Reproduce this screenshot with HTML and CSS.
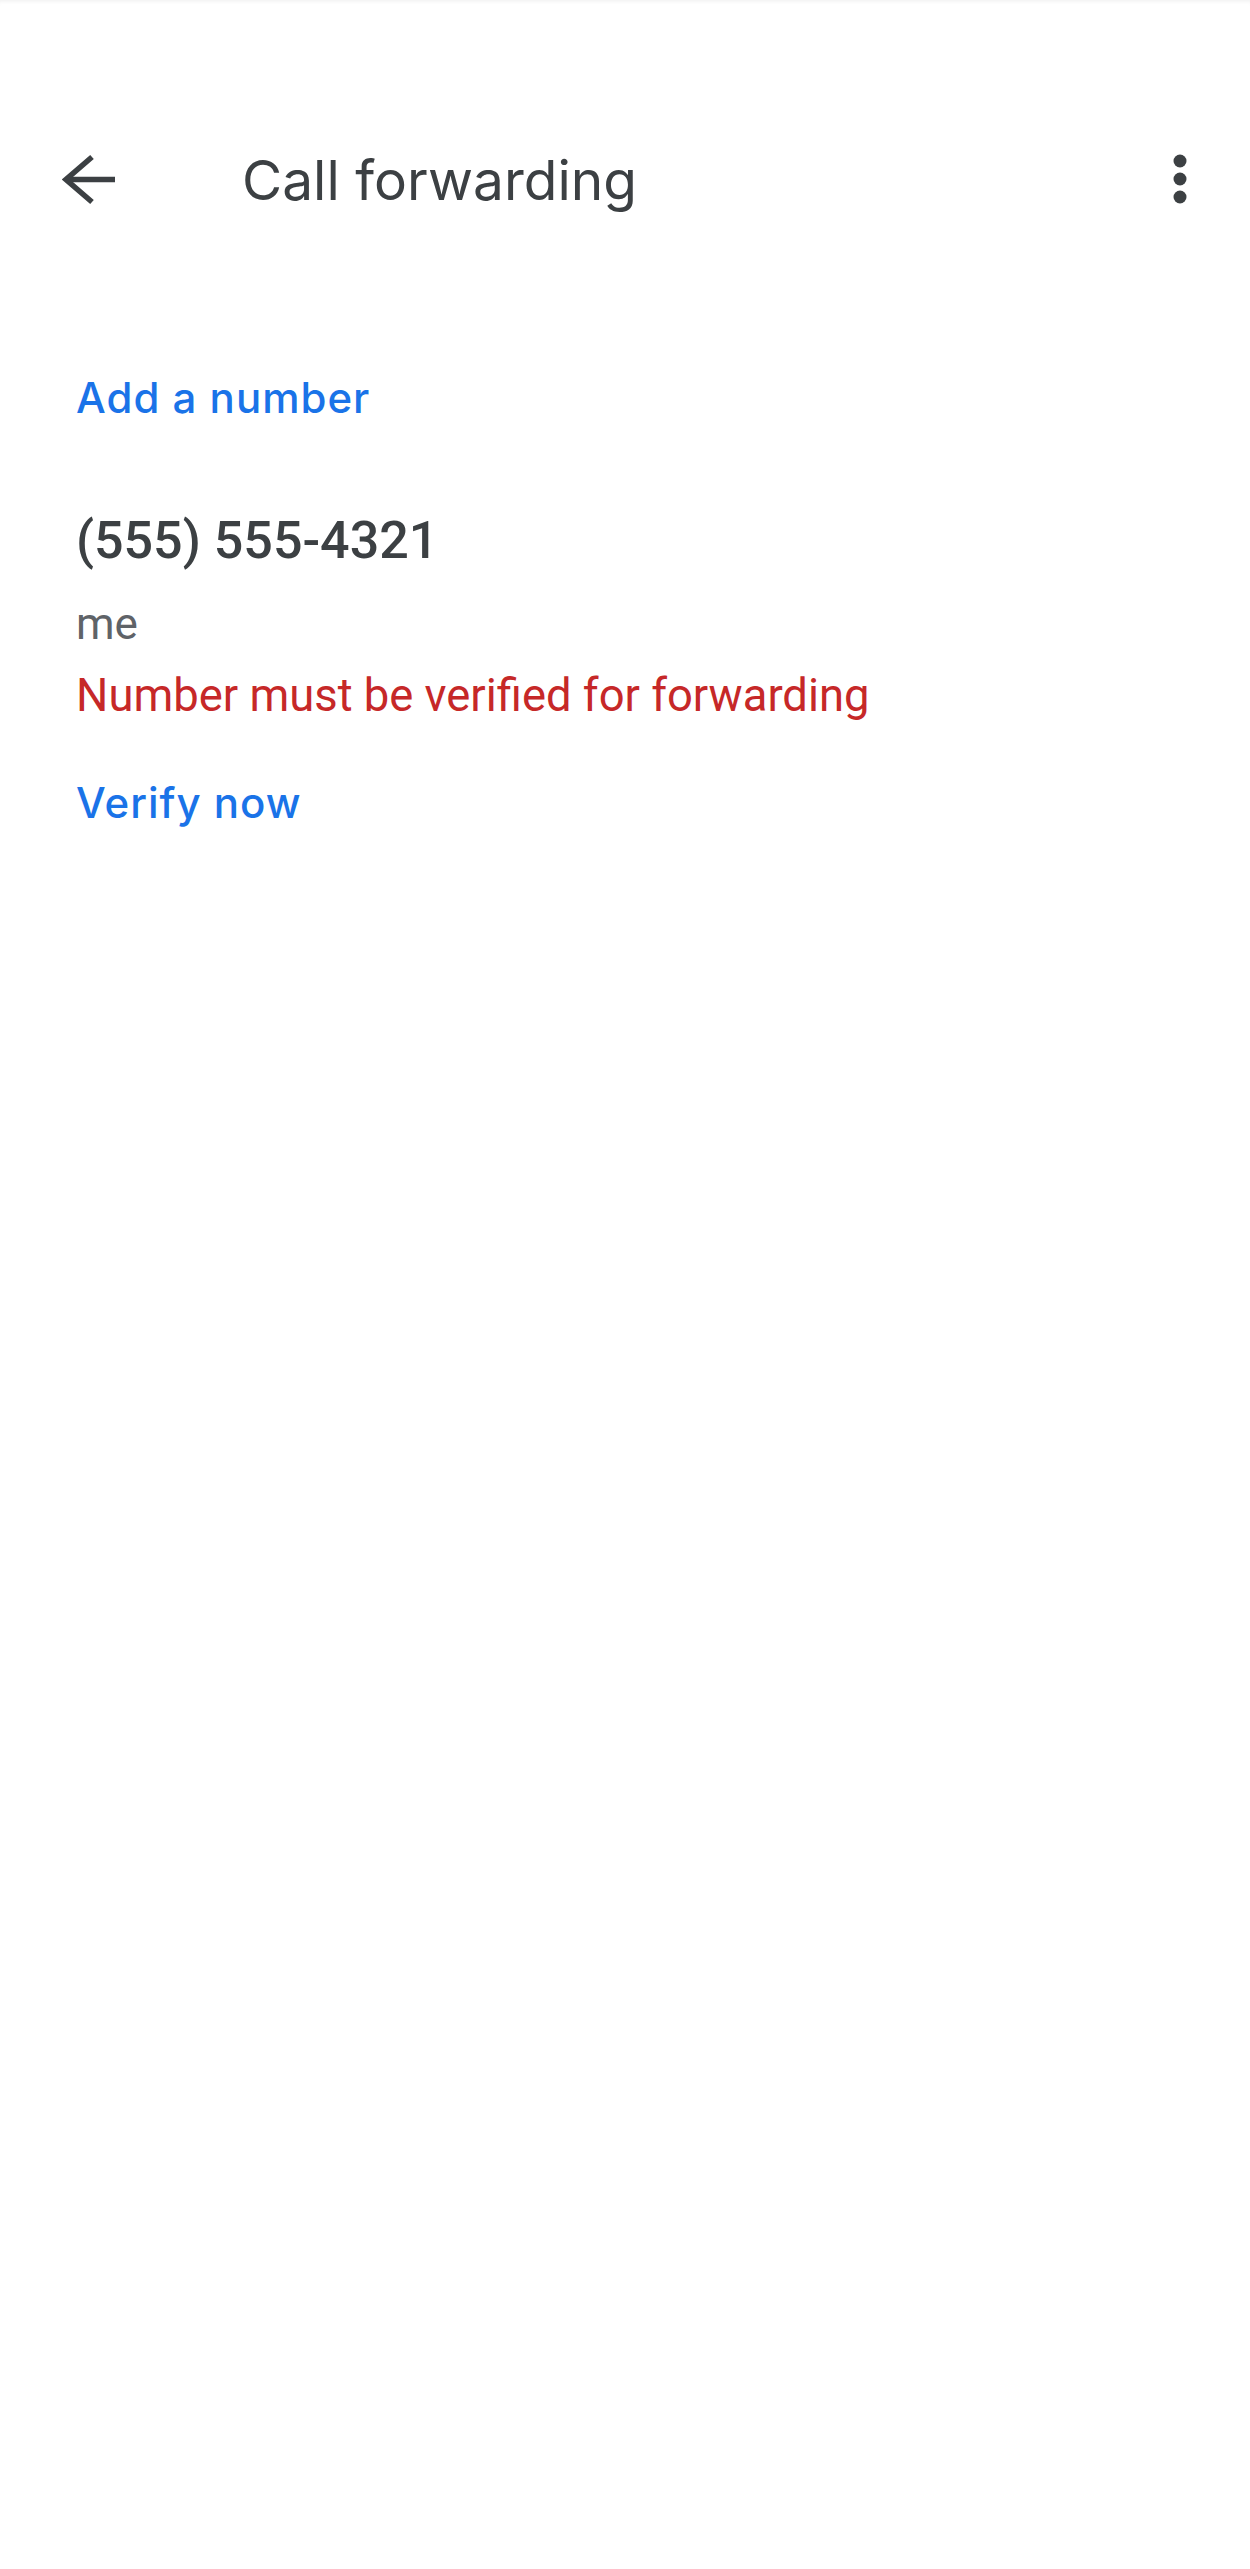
FILE: index.html
```html
<!DOCTYPE html>
<html lang="en">
<head>
<meta charset="utf-8">
<title>Call forwarding</title>
<link rel="stylesheet" href="styles.css">
</head>
<body>
<div class="screen">
  <header class="toolbar">
    <svg class="back" width="56" height="52" viewBox="0 0 56 52" aria-label="Back">
      <polyline points="30,3 4,25.5 30,48" fill="none" stroke="#3c4043" stroke-width="5.5" stroke-linejoin="miter"/>
      <line x1="5" y1="25.5" x2="53" y2="25.5" stroke="#3c4043" stroke-width="5.5"/>
    </svg>
    <h1 class="title">Call forwarding</h1>
    <svg class="more" width="14" height="52" viewBox="0 0 14 52" aria-label="More options">
      <circle cx="7" cy="7" r="6.5" fill="#3c4043"/>
      <circle cx="7" cy="25" r="6.5" fill="#3c4043"/>
      <circle cx="7" cy="43" r="6.5" fill="#3c4043"/>
    </svg>
  </header>
  <main class="content">
    <div class="link add">Add a number</div>
    <div class="phone">(555) 555-4321</div>
    <div class="label">me</div>
    <div class="error">Number must be verified for forwarding</div>
    <div class="link verify">Verify now</div>
  </main>
</div>
</body>
</html>
```
FILE: styles.css
```css
html, body {
  margin: 0;
  padding: 0;
  background: #ffffff;
}

.screen {
  width: 1250px;
  min-height: 2569px;
  box-sizing: border-box;
  padding-top: 130px;
  box-shadow: inset 0 4px 4px -3px rgba(0, 0, 0, 0.07);
}

.toolbar {
  display: flex;
  align-items: center;
  height: 100px;
  padding: 0 63px 0 62px;
}

.back {
  flex: none;
  display: block;
}

.title {
  flex: 1;
  margin: 0 0 0 124px;
  font-family: "Inter", "Open Sans", sans-serif;
  font-weight: 400;
  font-size: 55px;
  line-height: 1;
  color: #3c4043;
}

.more {
  flex: none;
  display: block;
}

.content {
  display: flex;
  flex-direction: column;
  align-items: flex-start;
  padding: 138px 0 0 76px;
}

.link {
  font-family: "Inter", "Open Sans", sans-serif;
  font-weight: 500;
  font-size: 42px;
  line-height: 60px;
  color: #1a73e8;
  letter-spacing: 1px;
}

.phone {
  margin-top: 78px;
  font-family: "Roboto", "Liberation Sans", sans-serif;
  font-weight: 500;
  font-size: 52px;
  line-height: 70px;
  color: #3c4043;
}

.label {
  margin-top: 18px;
  font-family: "Roboto", "Liberation Sans", sans-serif;
  font-weight: 400;
  font-size: 44px;
  line-height: 60px;
  color: #5f6368;
}

.error {
  margin-top: 12px;
  font-family: "Roboto", "Liberation Sans", sans-serif;
  font-weight: 400;
  font-size: 45.4px;
  line-height: 60px;
  color: #c62828;
}

.verify {
  margin-top: 47px;
}
```
